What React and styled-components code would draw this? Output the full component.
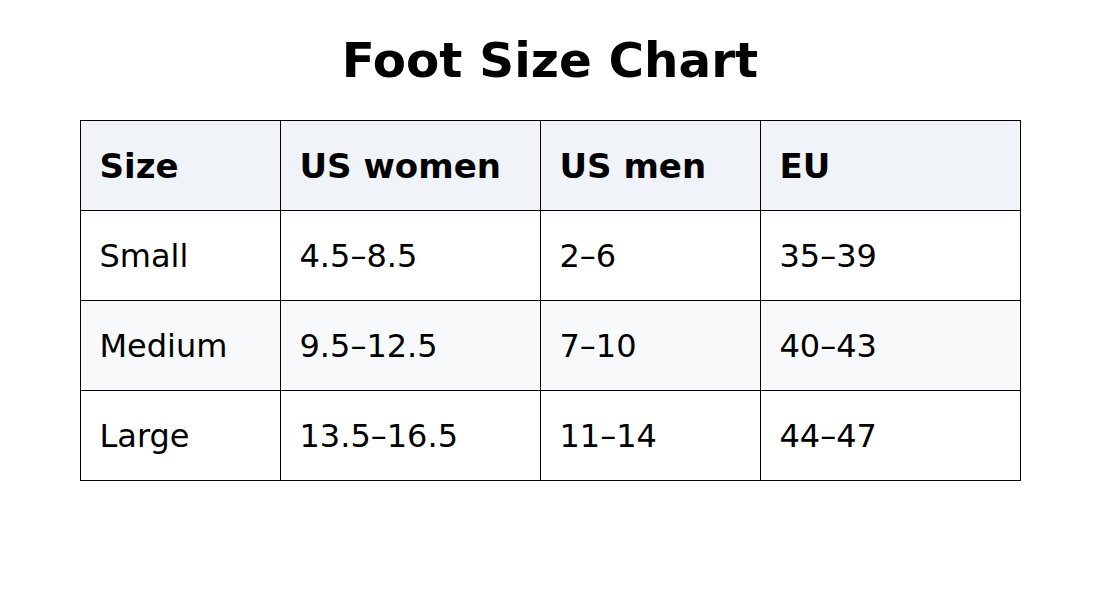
import React from 'react';
import styled, { createGlobalStyle } from 'styled-components';

const GlobalStyle = createGlobalStyle`
  body {
    margin: 0;
    background: #ffffff;
    font-family: "DejaVu Sans", Verdana, sans-serif;
    color: #000000;
  }
`

const Page = styled.div`
  padding: 32px 80px 0;
  display: flex;
  flex-direction: column;
  align-items: center;
`

const Title = styled.h1`
  margin: 0;
  font-size: 48.4px;
  line-height: 56px;
  font-weight: bold;
`

const Table = styled.table`
  margin-top: 32px;
  width: 940px;
  border-collapse: collapse;
  table-layout: fixed;
  font-size: 32px;
`

const Row = styled.tr`
  height: 90px;
  background: ${p => (p.$head ? '#f0f4f8' : p.$alt ? '#f8f9fb' : '#ffffff')};
`

const Cell = styled.td`
  border: 1px solid #000000;
  padding: 0 19px;
  vertical-align: middle;
  text-align: left;
  font-weight: ${p => (p.$head ? 'bold' : 'normal')};
  font-size: ${p => (p.$head ? '34px' : '32px')};
  white-space: nowrap;
`

const widths = [200, 260, 220, 260]

const head = ['Size', 'US women', 'US men', 'EU']
const rows = [
  ['Small', '4.5–8.5', '2–6', '35–39'],
  ['Medium', '9.5–12.5', '7–10', '40–43'],
  ['Large', '13.5–16.5', '11–14', '44–47'],
]

export default function App() {
  return (
    <>
      <GlobalStyle />
      <Page>
        <Title>Foot Size Chart</Title>
        <Table>
          <colgroup>
            {widths.map((w, i) => <col key={i} style={{ width: w }} />)}
          </colgroup>
          <thead>
            <Row $head>
              {head.map(h => <Cell as="th" $head key={h}>{h}</Cell>)}
            </Row>
          </thead>
          <tbody>
            {rows.map((r, i) => (
              <Row key={r[0]} $alt={i === 1}>
                {r.map((c, j) => <Cell key={j}>{c}</Cell>)}
              </Row>
            ))}
          </tbody>
        </Table>
      </Page>
    </>
  );
}
